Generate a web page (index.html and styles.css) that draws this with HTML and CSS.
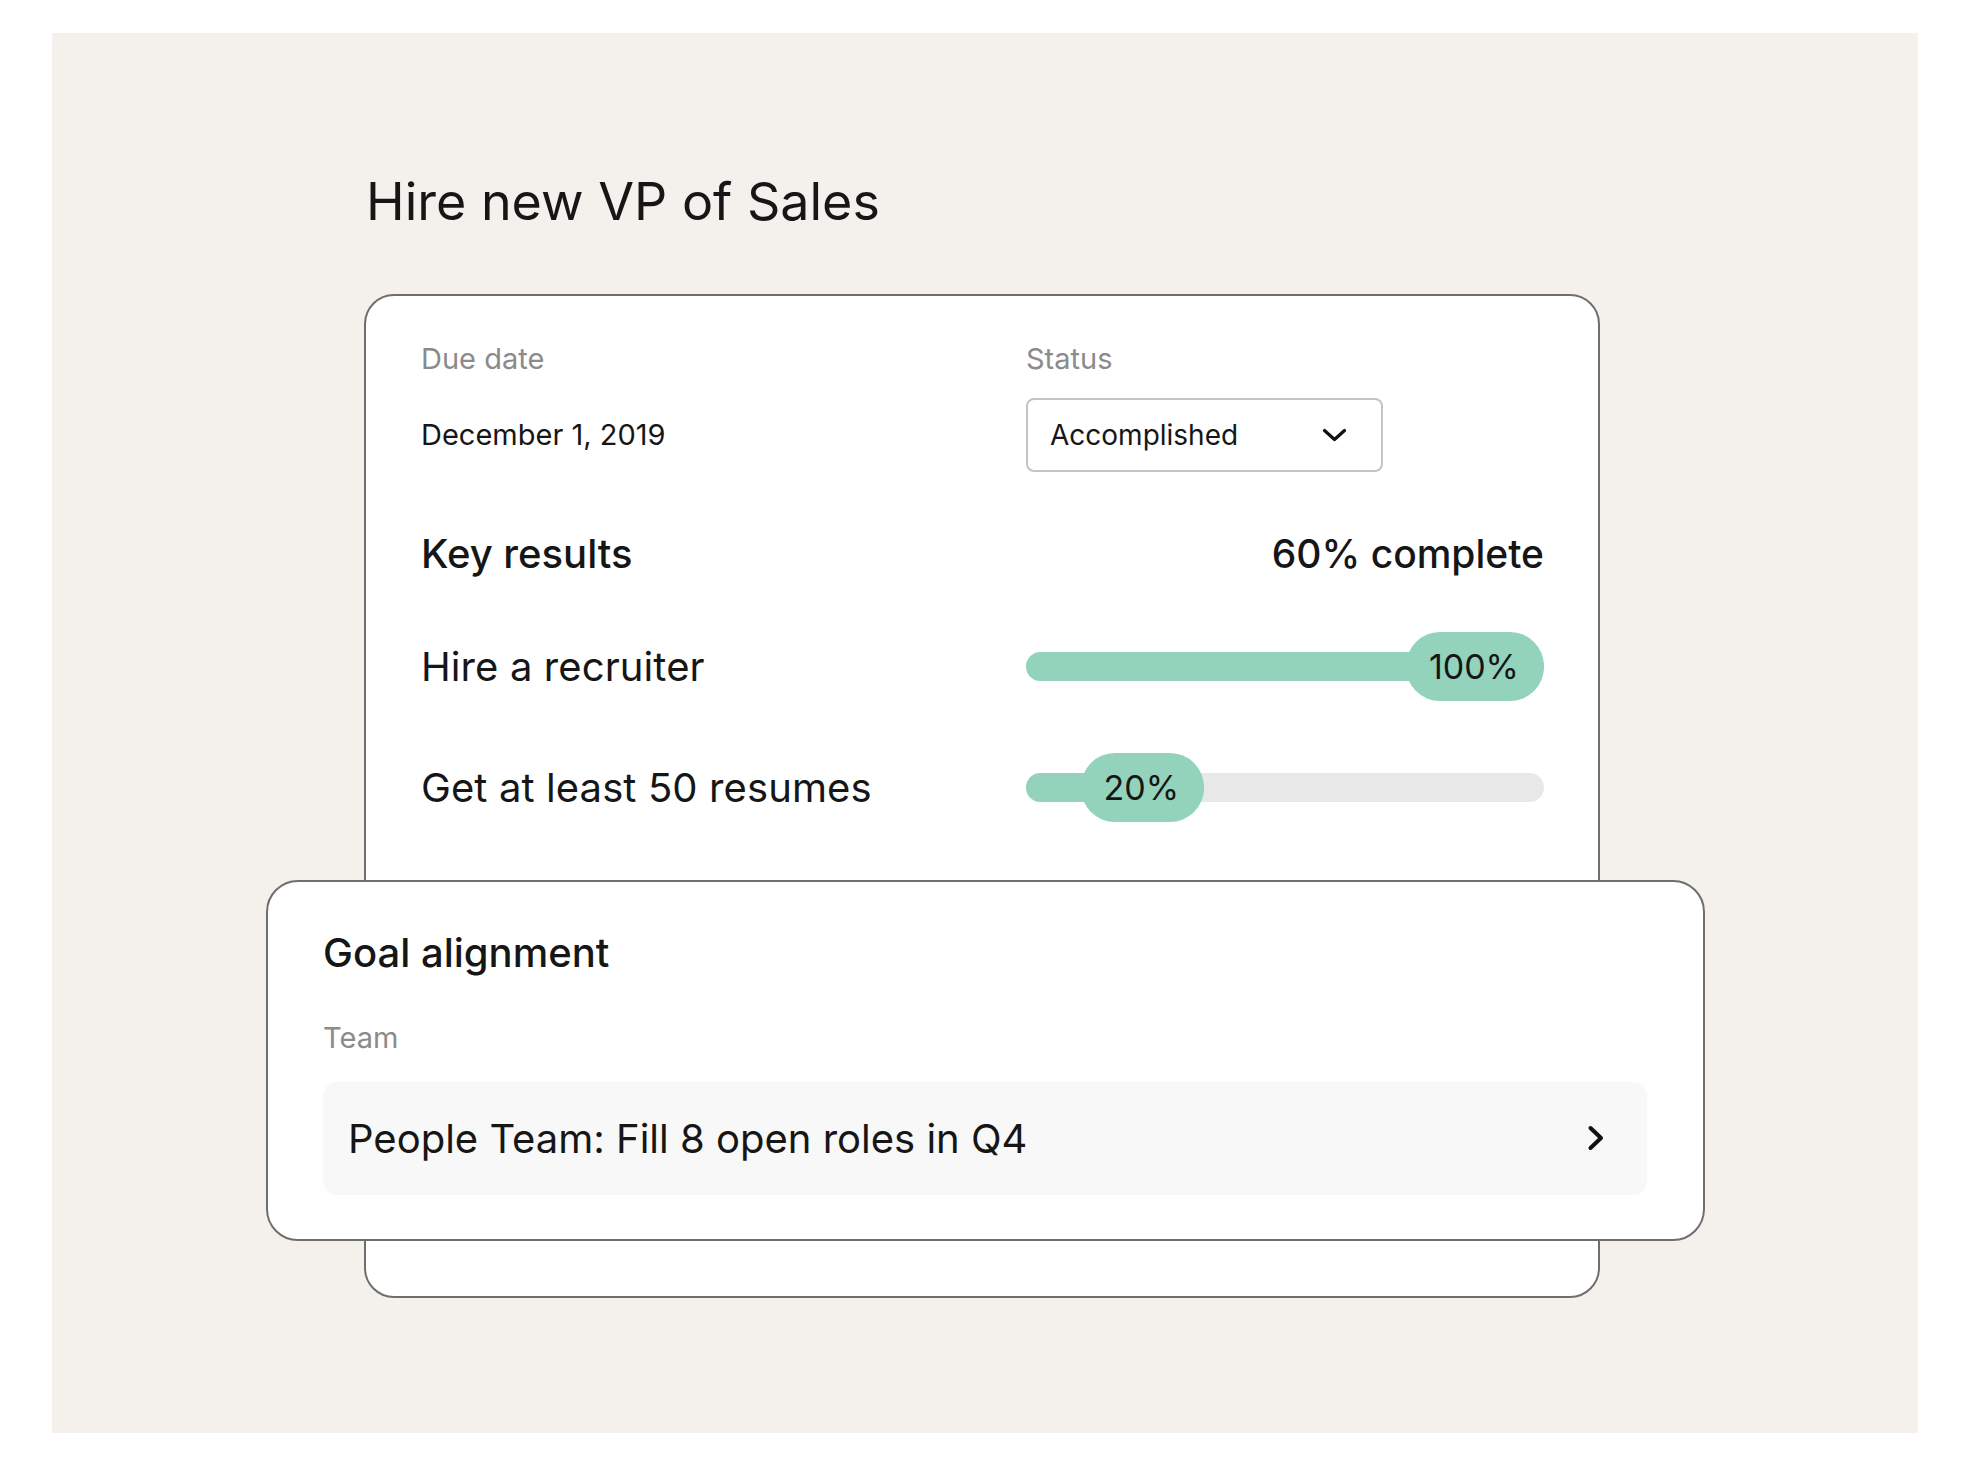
FILE: index.html
```html
<!DOCTYPE html>
<html lang="en">
  <head>
    <meta charset="UTF-8" />
    <meta name="viewport" content="width=device-width, initial-scale=1.0" />
    <title>Hire new VP of Sales</title>
    <link rel="stylesheet" href="styles.css">
  </head>
  <body>
    <div class="panel">
      <div class="goal">
        <h1 class="goal-title">Hire new VP of Sales</h1>

        <div class="card">
          <div class="fields">
            <div class="field-label">Due date</div>
            <div class="field-label">Status</div>
            <div class="field-value">December 1, 2019</div>
            <div class="select">
              <span>Accomplished</span>
              <svg width="25" height="14" viewBox="0 0 25 14">
                <path d="M2.5 2.5 L12.5 11.5 L22.5 2.5" fill="none" stroke="#111" stroke-width="3.2" stroke-linecap="round" stroke-linejoin="round" />
              </svg>
            </div>
          </div>

          <div class="results-head">
            <h2>Key results</h2>
            <span class="results-total">60% complete</span>
          </div>

          <div class="result">
            <span class="result-name">Hire a recruiter</span>
            <div class="bar">
              <div class="bar-fill" style="width: 100%"><span class="bar-pill">100%</span></div>
            </div>
          </div>
          <div class="result">
            <span class="result-name">Get at least 50 resumes</span>
            <div class="bar">
              <div class="bar-fill" style="width: 34.4%"><span class="bar-pill">20%</span></div>
            </div>
          </div>

          <!-- Alignment card sits over the bottom of the goal card -->
          <div class="card align-card">
            <h2>Goal alignment</h2>
            <div class="field-label">Team</div>
            <a class="align-row" href="#">
              <span>People Team: Fill 8 open roles in Q4</span>
              <svg width="18" height="28" viewBox="0 0 18 28">
                <path d="M3.5 4 L14 14 L3.5 24" fill="none" stroke="#111" stroke-width="4" stroke-linecap="round" stroke-linejoin="round" />
              </svg>
            </a>
          </div>
        </div>
      </div>
    </div>
  </body>
</html>
```

FILE: styles.css
```css
/* Global Styles */
body {
  margin: 0;
  padding: 33px 53px 34px 52px;
  background: #ffffff;
  font-family: "Inter", "Roboto", sans-serif;
  color: #161616;
}
h1,
h2 {
  margin: 0;
}
/* Beige backdrop */
.panel {
  background: #f4f0ec;
  height: 1400px;
  padding-top: 138px;
  box-sizing: border-box;
}
.goal {
  width: 1236px;
  margin-left: 312px;
}
.goal-title {
  font-size: 52px;
  font-weight: 400;
  line-height: 1.2;
  margin-bottom: 61px;
  padding-left: 2px;
}
/* Cards */
.card {
  background: #ffffff;
  border: 2px solid #6e6e6e;
  border-radius: 30px;
  padding: 46px 54px 55px 55px;
}
.fields {
  display: grid;
  grid-template-columns: 605px 1fr;
  row-gap: 21px;
  align-items: center;
}
.field-label {
  font-size: 29px;
  line-height: 1.2;
  color: #8b8b8b;
}
.field-value {
  font-size: 29px;
  line-height: 1.2;
}
.select {
  width: 357px;
  height: 74px;
  box-sizing: border-box;
  border: 2px solid #c4c4c4;
  border-radius: 8px;
  display: flex;
  align-items: center;
  justify-content: space-between;
  padding: 0 34px 0 22px;
  font-size: 28px;
}
/* Key results */
.results-head {
  display: flex;
  justify-content: space-between;
  align-items: baseline;
  margin-top: 58px;
  margin-bottom: 54px;
}
.results-head h2,
.align-card h2 {
  font-size: 40px;
  font-weight: 500;
  line-height: 1.2;
}
.results-total {
  font-size: 39px;
  font-weight: 500;
}
.result {
  display: grid;
  grid-template-columns: 605px 1fr;
  align-items: center;
  height: 69px;
  margin-bottom: 52px;
}
.result-name {
  font-size: 40px;
  letter-spacing: 0.1px;
}
.bar {
  height: 29px;
  border-radius: 15px;
  background: #e8e8e8;
  display: flex;
  align-items: center;
}
.bar-fill {
  height: 29px;
  border-radius: 15px;
  background: #93d3bc;
  display: flex;
  justify-content: flex-end;
  align-items: center;
}
.bar-pill {
  flex-shrink: 0;
  height: 69px;
  display: flex;
  align-items: center;
  padding: 0 25px 0 23px;
  border-radius: 34px;
  background: #93d3bc;
  font-size: 34px;
}
/* Goal alignment */
.align-card {
  margin: 58px -161px 0 -155px;
  border-radius: 32px;
  padding: 47px 56px 44px 55px;
}
.align-card .field-label {
  margin-top: 44px;
}
.align-row {
  display: flex;
  align-items: center;
  justify-content: space-between;
  height: 113px;
  margin-top: 26px;
  padding: 0 42px 0 25px;
  border-radius: 14px;
  background: #f8f8f8;
  color: #161616;
  text-decoration: none;
  font-size: 40px;
}
```
